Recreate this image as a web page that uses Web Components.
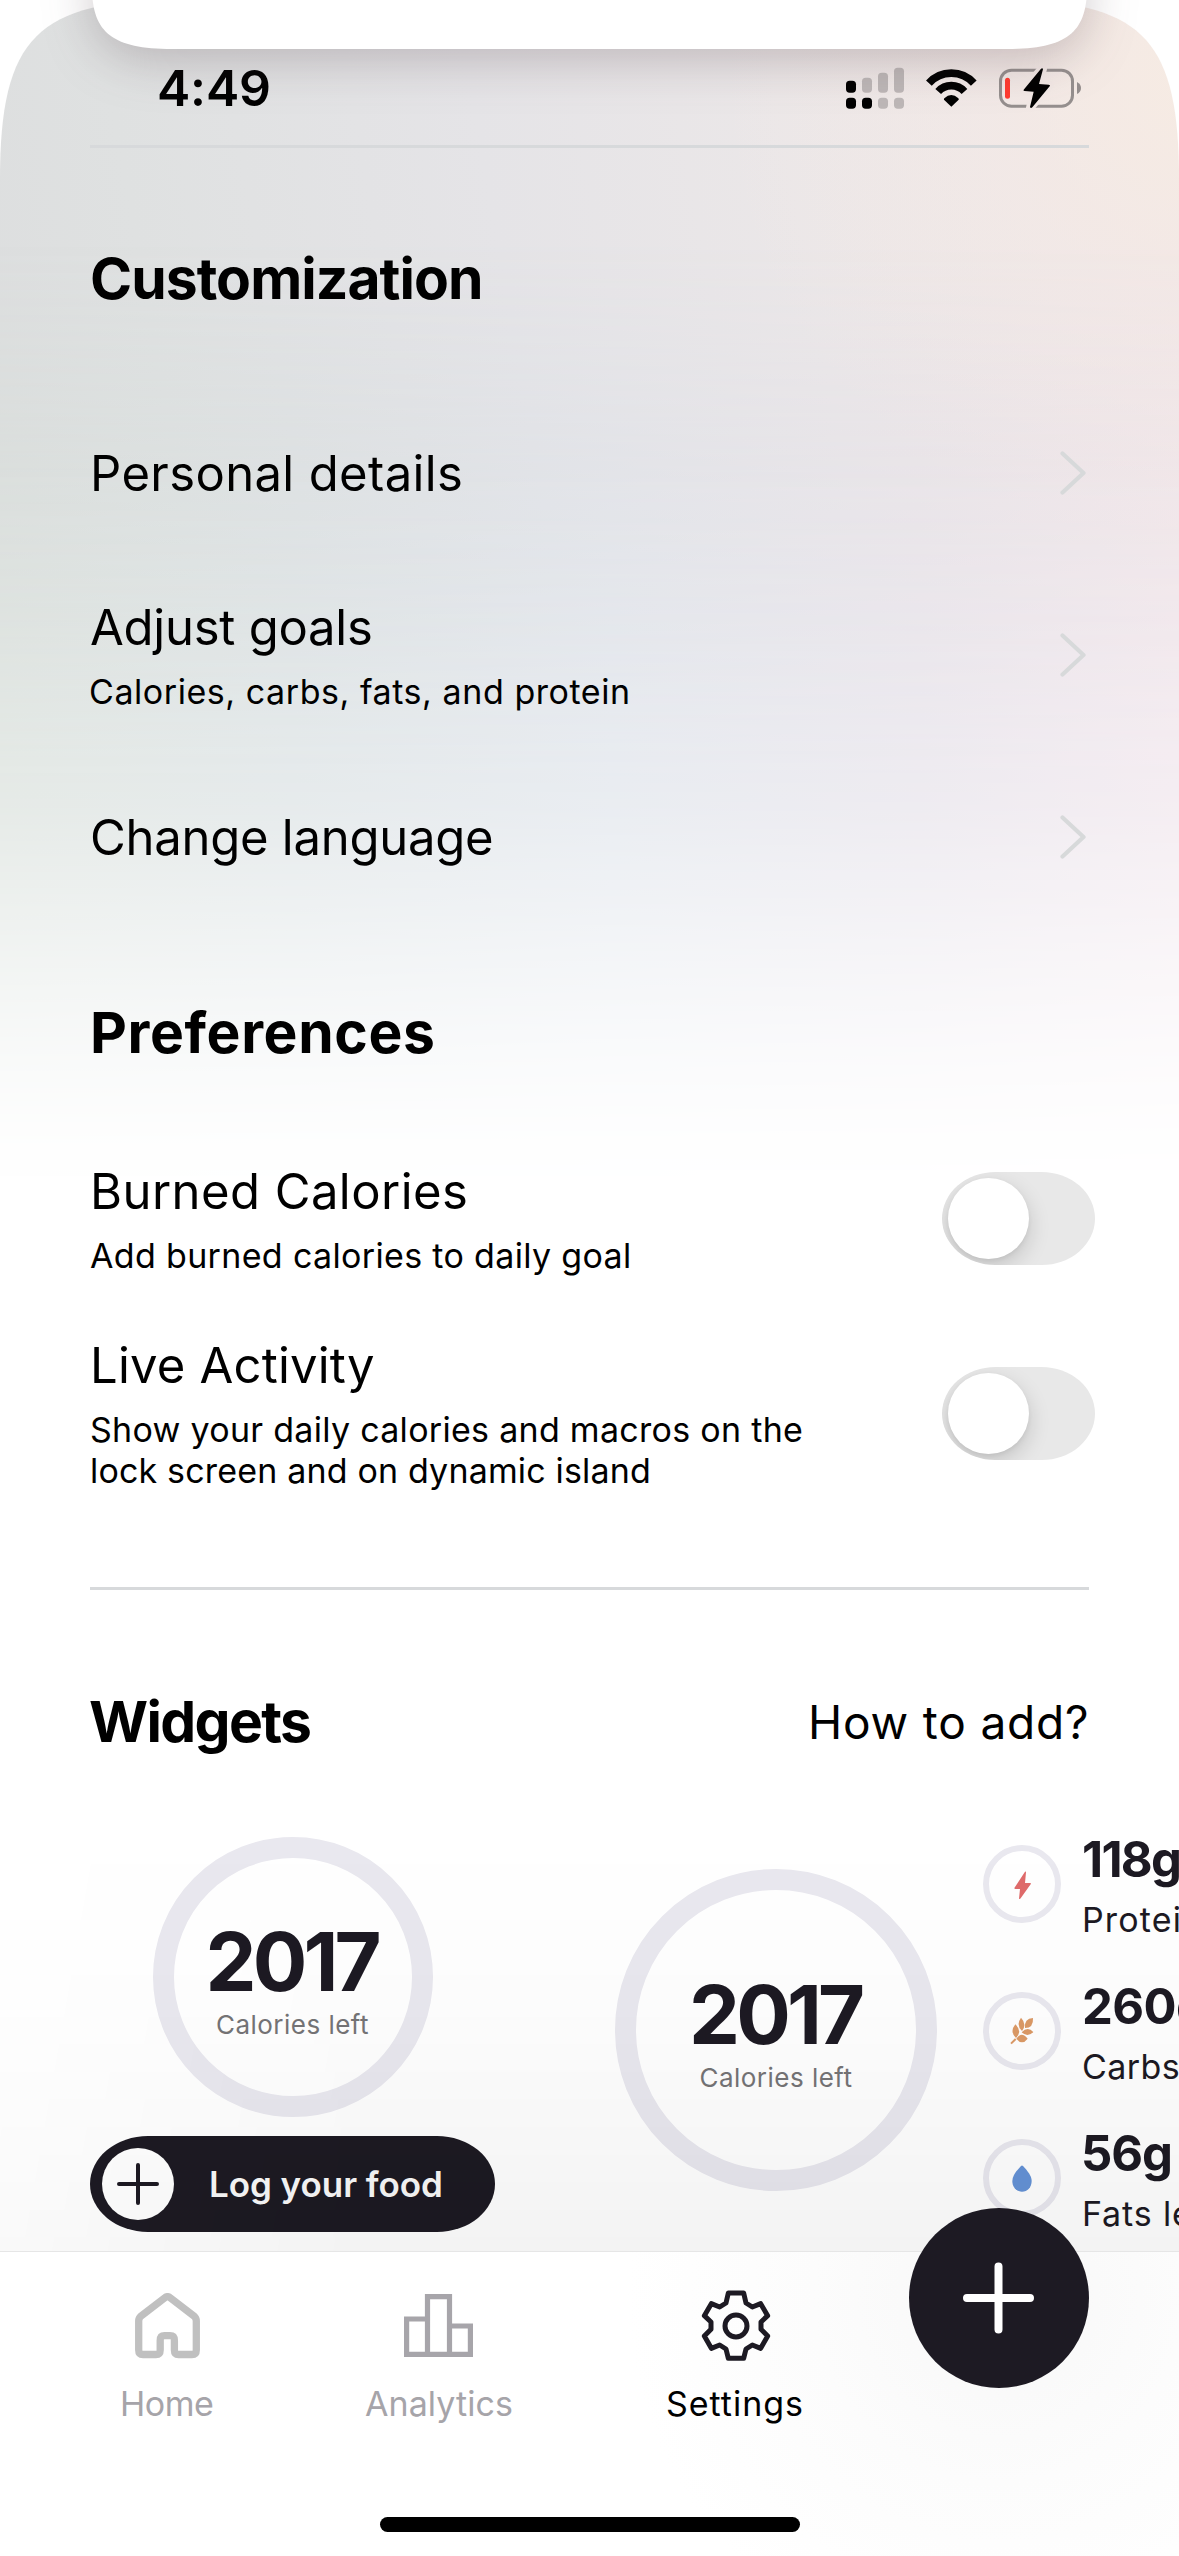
<!DOCTYPE html>
<html lang="en">
<head>
<meta charset="utf-8">
<title>Settings</title>
<style>
html,body{margin:0;padding:0;background:#fff}
body{width:1179px;height:2556px;overflow:hidden;font-family:Inter,"Noto Sans",sans-serif;color:#000}
</style>
</head>
<body>
<app-screen></app-screen>
<script>
const pen = document.createElement('canvas').getContext('2d');

/* One line of text whose drawn width is w and whose first glyph starts at inset. */
class UiText extends HTMLElement {
  connectedCallback() {
    if (this.shadowRoot) return;
    const a = (n, d) => this.getAttribute(n) || d;
    const size = +a('size', 49), weight = a('weight', '400'), w = +a('w', 100);
    const inset = +a('inset', 0), lh = +a('lh', 56), text = this.textContent;
    pen.font = `${weight} ${size}px Inter, "Noto Sans", sans-serif`;
    const m = pen.measureText(text);
    const ls = (w - m.actualBoundingBoxLeft - m.actualBoundingBoxRight) / Math.max(1, text.length - 1);
    this.attachShadow({mode: 'open'}).innerHTML = `<style>
      :host{display:block;flex:none;width:${w + inset}px;height:${lh}px;line-height:${lh + 2}px;white-space:nowrap;
        font-size:${size}px;font-weight:${weight};letter-spacing:${ls.toFixed(3)}px}
      span{display:inline-block;margin-left:${(inset + m.actualBoundingBoxLeft).toFixed(2)}px}
    </style><span><slot></slot></span>`;
  }
}

class StatusBar extends HTMLElement {
  connectedCallback() {
    this.attachShadow({mode: 'open'}).innerHTML = `<style>
      :host{display:flex;align-items:center;height:56px;padding:60px 97px 29px 159px;justify-content:space-between}
      svg{display:block;width:236px;height:44px;margin-top:-1px}
      ui-text{margin-top:-2px}
    </style>
    <ui-text size="50" weight="600" w="110" lh="56">4:49</ui-text>
    <svg viewBox="78 76 708 132">
      <g fill="#bdb7b7"><rect x="126" y="111" width="30" height="45" rx="11"/><rect x="174" y="96" width="30" height="60" rx="11"/><rect x="222" y="81" width="30" height="75" rx="11"/>
      <rect x="174" y="171" width="30" height="33" rx="11"/><rect x="222" y="171" width="30" height="33" rx="11"/></g>
      <rect x="78" y="120" width="30" height="36" rx="11"/><rect x="78" y="171" width="30" height="33" rx="11"/><rect x="126" y="171" width="30" height="33" rx="11"/>
      <g fill="none" stroke="#000" stroke-width="23"><path d="M326.7 127.4A90.5 90.5 0 0 1 461.3 127.4"/><path d="M354.6 152.5A53 53 0 0 1 433.4 152.5"/></g>
      <path d="M394 198L372 177Q371 175 373 173Q394 153 415 173Q417 175 416 177Z"/>
      <rect x="541.500" y="88.500" width="216" height="108" rx="33" fill="none" stroke="#958f8e" stroke-width="9"/>
      <path d="M771 124Q783 130 783 142Q783 154 771 160Z" fill="#958f8e"/>
      <rect x="555" y="111" width="15" height="63" rx="7.500" fill="#ff3b30"/>
      <path d="M665 84L611 147Q609 151 614 151L641 153L630 202L689 137Q692 132 686 132L657 130L669 84Z" stroke="#f2e8e5" stroke-width="24" stroke-linejoin="round"/>
      <path d="M663 84L611 147Q609 151 614 151L641 153L630 199Q632 205 637 200L689 137Q692 132 686 132L657 130L669 86Q668 80 663 84Z"/>
    </svg>`;
  }
}

class SectionRule extends HTMLElement {
  connectedCallback() {
    this.attachShadow({mode: 'open'}).innerHTML = `<style>:host{display:block;height:3px;background:#d7d9db;margin:0 90px}</style>`;
  }
}

class SettingRow extends HTMLElement {
  connectedCallback() {
    this.attachShadow({mode: 'open'}).innerHTML = `<style>
      :host{display:flex;justify-content:space-between;align-items:center;margin:0 90px}
      .copy{display:flex;flex-direction:column}
    </style><div class="copy"><slot></slot></div><slot name="end"></slot>`;
  }
}

class ChevronIcon extends HTMLElement {
  connectedCallback() {
    this.attachShadow({mode: 'open'}).innerHTML = `<style>:host{display:block;margin-right:3px}svg{display:block}</style>
    <svg width="26" height="44" viewBox="0 0 26 44" fill="none" stroke="#d7d9da" stroke-width="4.200" stroke-linecap="round" stroke-linejoin="round"><path d="M2.500 2.500L23.500 22L2.500 41.500"/></svg>`;
  }
}

class ToggleSwitch extends HTMLElement {
  connectedCallback() {
    this.attachShadow({mode: 'open'}).innerHTML = `<style>
      :host{display:flex;align-items:center;box-sizing:border-box;width:153px;height:93px;padding-left:6px;margin-right:-6px;margin-top:-1px;border-radius:54px/47px;background:#e8e8e8;overflow:hidden}
      i{display:block;width:81px;height:81px;border-radius:50%;background:#fff;box-shadow:0 8px 22px rgba(0,0,0,.16),0 2px 5px rgba(0,0,0,.06)}
    </style><i></i>`;
  }
}

class CalorieRing extends HTMLElement {
  connectedCallback() {
    const d = this.getAttribute('size');
    this.attachShadow({mode: 'open'}).innerHTML = `<style>
      :host{display:flex;flex-direction:column;align-items:center;box-sizing:border-box;flex:none;width:${d}px;height:${d}px;border:21px solid #e9e8ef;border-radius:50%;
        padding-top:${d / 2 - 21 - 55}px;color:#1d1a23}
      .sub{color:#757476;margin-top:4px}
    </style>
    <ui-text size="81" weight="700" w="170" inset="4" lh="78">2017</ui-text>
    <ui-text class="sub" size="26" w="151" lh="40">Calories left</ui-text>`;
  }
}

const GLYPHS = {
  bolt: '<path fill="#df6b6b" d="M150 122L118 171Q118 174 121 174L135 174L132 203Q134 206 137 202L168 158Q168 156 165 156L150 156L153 124Q153 120 150 122Z"/>',
  wheat: `<g fill="#dc9a66" transform="translate(0 -441)"><path d="M108 638L122 624" stroke="#dc9a66" stroke-width="6"/>
    <path d="M121 580Q143 601 123 621Q103 602 121 580Z"/><path d="M138 560Q157 580 141 600Q122 582 138 560Z"/>
    <path d="M174 561Q176 591 150 591Q147 563 174 561Z"/><path d="M140 604Q158 585 175 603Q158 621 140 604Z"/><path d="M124 623Q140 600 158 623Q141 645 124 623Z"/></g>`,
  drop: '<path fill="#6593d7" d="M138 123Q141 120 144 123C157 137 170 152 170 168C170 187 157 200 141 200C125 200 112 187 112 168C112 152 125 137 138 123Z"/>'
};

class MacroStat extends HTMLElement {
  connectedCallback() {
    this.attachShadow({mode: 'open'}).innerHTML = `<style>
      :host{display:flex;gap:23px;height:78px;flex:none;color:#1d1a23}
      svg{display:block;flex:none}
      div{display:flex;flex-direction:column;gap:13px;margin-top:-11px}
    </style>
    <svg width="78" height="78" viewBox="24 42 234 234"><circle cx="141" cy="159" r="108" fill="none" stroke="#e9e8ef" stroke-width="18"/>${GLYPHS[this.getAttribute('icon')]}</svg>
    <div><slot></slot></div>`;
  }
}

class LogButton extends HTMLElement {
  connectedCallback() {
    this.attachShadow({mode: 'open'}).innerHTML = `<style>
      :host{display:flex;align-items:center;box-sizing:border-box;width:405px;height:96px;padding-left:12px;gap:37px;border-radius:58px/48px;background:#1d1a23;color:#f9f9f9}
      svg{display:block}
    </style>
    <svg width="72" height="72" viewBox="0 0 72 72"><circle cx="36" cy="36" r="36" fill="#fff"/><path d="M17 36H55M36 17V55" stroke="#1d1a23" stroke-width="4" stroke-linecap="round"/></svg>
    <slot></slot>`;
  }
}

const TABS = {
  home: '<svg width="65" height="66" viewBox="0 0 65 66" fill="none" stroke="#c0c0c0" stroke-width="7.300"><path d="M3.700 28Q3.700 25 6 23L30 4.700Q32.500 2.700 35 4.700L59 23Q61.300 25 61.300 28V57Q61.300 61.500 57 61.500H43.500Q39.400 61.500 39.400 57V47.500Q39.400 42.700 35 42.700H29.500Q25.200 42.700 25.200 47.500V57Q25.200 61.500 21 61.500H8Q3.700 61.500 3.700 57Z"/></svg>',
  chart: '<svg width="69" height="63" viewBox="0 0 69 63" fill="none" stroke="#a7a5aa" stroke-width="5.200"><path d="M23.500 25H2.600V60.400H66.400V32H45.500M23.500 60.400V2.600H45.500V60.400"/></svg>',
  gear: '<svg style="margin-left:2px" width="70" height="71" viewBox="124 60 210 213" fill="none" stroke="#1d1a23" stroke-width="15" stroke-linejoin="round"><path d="M206 69H252L259 99L278 111L303 101L324 137L304 156V178L324 198L303 235L278 225L259 237L252 265H206L199 237L180 225L155 235L134 198L154 178V156L134 137L155 101L180 111L199 99Z"/><circle cx="229" cy="168" r="33"/></svg>'
};

class NavTab extends HTMLElement {
  connectedCallback() {
    this.attachShadow({mode: 'open'}).innerHTML = `<style>
      :host{display:flex;flex-direction:column;align-items:center;flex:none;color:#a6a4a9}
      :host([active]){color:#000}
      .icon{height:73px;display:flex;align-items:center}
      svg{display:block}
      .label{margin-top:19px}
    </style><div class="icon">${TABS[this.getAttribute('icon')]}</div><div class="label"><slot></slot></div>`;
  }
}

class TabBar extends HTMLElement {
  connectedCallback() {
    this.attachShadow({mode: 'open'}).innerHTML = `<style>
      :host{display:block;position:relative;height:304px;border-top:1px solid #e6e6e6;background:radial-gradient(circle 370px at 998px 45px,#f9f9f9 15%,#fcfcfc 50%,#fff 100%)}
      .tabs{display:flex;padding:37px 0 0 122px;height:136px}
      .home{width:420px;height:15px;border-radius:8px;background:#000;margin:92px auto 0}
      .fab{flex:none;width:180px;height:180px;margin:-81px 0 0 107px}
      .a{margin-left:152px}.s{margin-left:155px}
      .fab svg{display:block}
    </style>
    <div class="tabs">
      <nav-tab icon="home"><ui-text size="34" w="91" lh="44">Home</ui-text></nav-tab>
      <nav-tab class="a" icon="chart"><ui-text size="34" w="147" lh="44">Analytics</ui-text></nav-tab>
      <nav-tab class="s" icon="gear" active><ui-text size="34" w="135" lh="44">Settings</ui-text></nav-tab>
      <div class="fab"><svg width="180" height="180" viewBox="0 0 180 180"><circle cx="90" cy="90" r="90" fill="#1d1a23"/><path d="M58 90H121M89.500 58.500V121.500" stroke="#fff" stroke-width="8" stroke-linecap="round"/></svg></div>
    </div>
    <div class="home"></div>`;
  }
}

class AppScreen extends HTMLElement {
  connectedCallback() {
    this.attachShadow({mode: 'open'}).innerHTML = `<style>
      :host{display:block;position:relative;width:1179px;height:2556px;overflow:hidden}
      .screen{position:relative;height:2556px;display:flex;flex-direction:column;clip-path:path("M0 180C0 37 37 0 180 0H999C1142 0 1179 37 1179 180V2556H0Z")}
      .wash{position:absolute;inset:0 0 auto 0;height:1200px;
        background:
          radial-gradient(ellipse 480px 480px at 1200px 80px,#f6ebe3 0%,#f4e9e580 45%,#f0e8ea00 100%),
          linear-gradient(80deg,#dbdcdd 0%,#dfe1e1 22%,#e5e4e7 48%,#ebe7e8 70%,#f2e8e7 100%)}
      .wash{-webkit-mask-image:linear-gradient(#000 0,#000 460px,rgba(0,0,0,.87) 620px,rgba(0,0,0,.64) 810px,rgba(0,0,0,.34) 960px,rgba(0,0,0,.14) 1070px,rgba(0,0,0,.04) 1140px,transparent 1195px)}
      .tint{position:absolute;inset:0;background:linear-gradient(90deg,#d8dfda 0%,#d9e0e2 25%,#dee3ea 52%,#e5e1e9 78%,#efe4eb 100%);
        -webkit-mask-image:linear-gradient(transparent 240px,#000 780px)}
      .sheet{position:absolute;left:0;top:0;filter:drop-shadow(0 12px 24px rgba(70,50,60,.25))}
      main{position:relative;height:2251px;overflow:hidden}
      .shade{position:absolute;left:0;right:0;top:1800px;height:451px;pointer-events:none;
        background:linear-gradient(transparent 8%,rgba(0,0,0,.012) 45%,rgba(0,0,0,.046));-webkit-mask-image:linear-gradient(100deg,rgba(0,0,0,.35),#000 35%)}
      .head{display:flex;justify-content:space-between;align-items:center;margin:0 92px 0 90px}
      .widgets{display:flex;align-items:flex-start;margin:86px 0 0 90px}
      .w1{display:flex;flex-direction:column;align-items:center;gap:19px;width:405px;flex:none}
      .w2{margin:32px 0 0 120px}
      .w3{display:flex;flex-direction:column;gap:69px;margin:8px 0 0 46px}
    </style>
    <div class="screen">
      <div class="wash"><div class="tint"></div></div>
      <main>
        <status-bar></status-bar>
        <section-rule></section-rule>
        <div class="head" style="margin-top:100px"><ui-text size="57" weight="650" w="388" inset="2" lh="60">Customization</ui-text></div>
        <setting-row style="margin-top:137px"><ui-text w="367" inset="4">Personal details</ui-text><chevron-icon slot="end"></chevron-icon></setting-row>
        <setting-row style="margin-top:98px"><ui-text w="280" inset="1">Adjust goals</ui-text><ui-text size="34" w="537" inset="1" lh="41" style="margin-top:15px">Calories, carbs, fats, and protein</ui-text><chevron-icon slot="end"></chevron-icon></setting-row>
        <setting-row style="margin-top:98px"><ui-text w="400" inset="2">Change language</ui-text><chevron-icon slot="end"></chevron-icon></setting-row>
        <div class="head" style="margin-top:137px"><ui-text size="57" weight="650" w="340" inset="3" lh="60">Preferences</ui-text></div>
        <setting-row style="margin-top:101px"><ui-text w="372" inset="4">Burned Calories</ui-text><ui-text size="34" w="539" inset="0" lh="41" style="margin-top:15px">Add burned calories to daily goal</ui-text><toggle-switch slot="end"></toggle-switch></setting-row>
        <setting-row style="margin-top:62px"><ui-text w="280" inset="4">Live Activity</ui-text><ui-text size="34" w="711" inset="1" lh="41" style="margin-top:15px">Show your daily calories and macros on the</ui-text><ui-text size="34" w="557" inset="2" lh="41">lock screen and on dynamic island</ui-text><toggle-switch slot="end"></toggle-switch></setting-row>
        <section-rule style="margin-top:97px"></section-rule>
        <div class="head" style="margin-top:100px"><ui-text size="57" weight="650" w="220" lh="60">Widgets</ui-text><ui-text size="46" w="275" lh="62">How to add?</ui-text></div>
        <div class="widgets" style="margin-top:85px">
          <div class="w1"><calorie-ring size="280"></calorie-ring><log-button><ui-text size="35" weight="600" w="230" lh="50" style="margin-top:-2px">Log your food</ui-text></log-button></div>
          <calorie-ring class="w2" size="322"></calorie-ring>
          <div class="w3">
            <macro-stat icon="bolt"><ui-text size="49" weight="700" w="95" lh="50">118g</ui-text><ui-text size="34" w="184" lh="44">Protein left</ui-text></macro-stat>
            <macro-stat icon="wheat"><ui-text size="49" weight="700" w="120" lh="50">260g</ui-text><ui-text size="34" w="158" lh="44">Carbs left</ui-text></macro-stat>
            <macro-stat icon="drop"><ui-text size="49" weight="700" w="86" lh="50">56g</ui-text><ui-text size="34" w="132" lh="44">Fats left</ui-text></macro-stat>
          </div>
        </div>
        <div class="shade"></div>
      </main>
      <tab-bar></tab-bar>
    </div>
    <svg class="sheet" width="1179" height="60" viewBox="0 0 1179 60" overflow="visible"><path fill="#fff" d="M92 -60V-10C93 32 112 49 172 49H1007C1067 49 1086 32 1087 -10V-60Z"/></svg>`;
  }
}

customElements.define('ui-text', UiText);
customElements.define('status-bar', StatusBar);
customElements.define('section-rule', SectionRule);
customElements.define('setting-row', SettingRow);
customElements.define('chevron-icon', ChevronIcon);
customElements.define('toggle-switch', ToggleSwitch);
customElements.define('calorie-ring', CalorieRing);
customElements.define('macro-stat', MacroStat);
customElements.define('log-button', LogButton);
customElements.define('nav-tab', NavTab);
customElements.define('tab-bar', TabBar);
customElements.define('app-screen', AppScreen);
</script>
</body>
</html>
